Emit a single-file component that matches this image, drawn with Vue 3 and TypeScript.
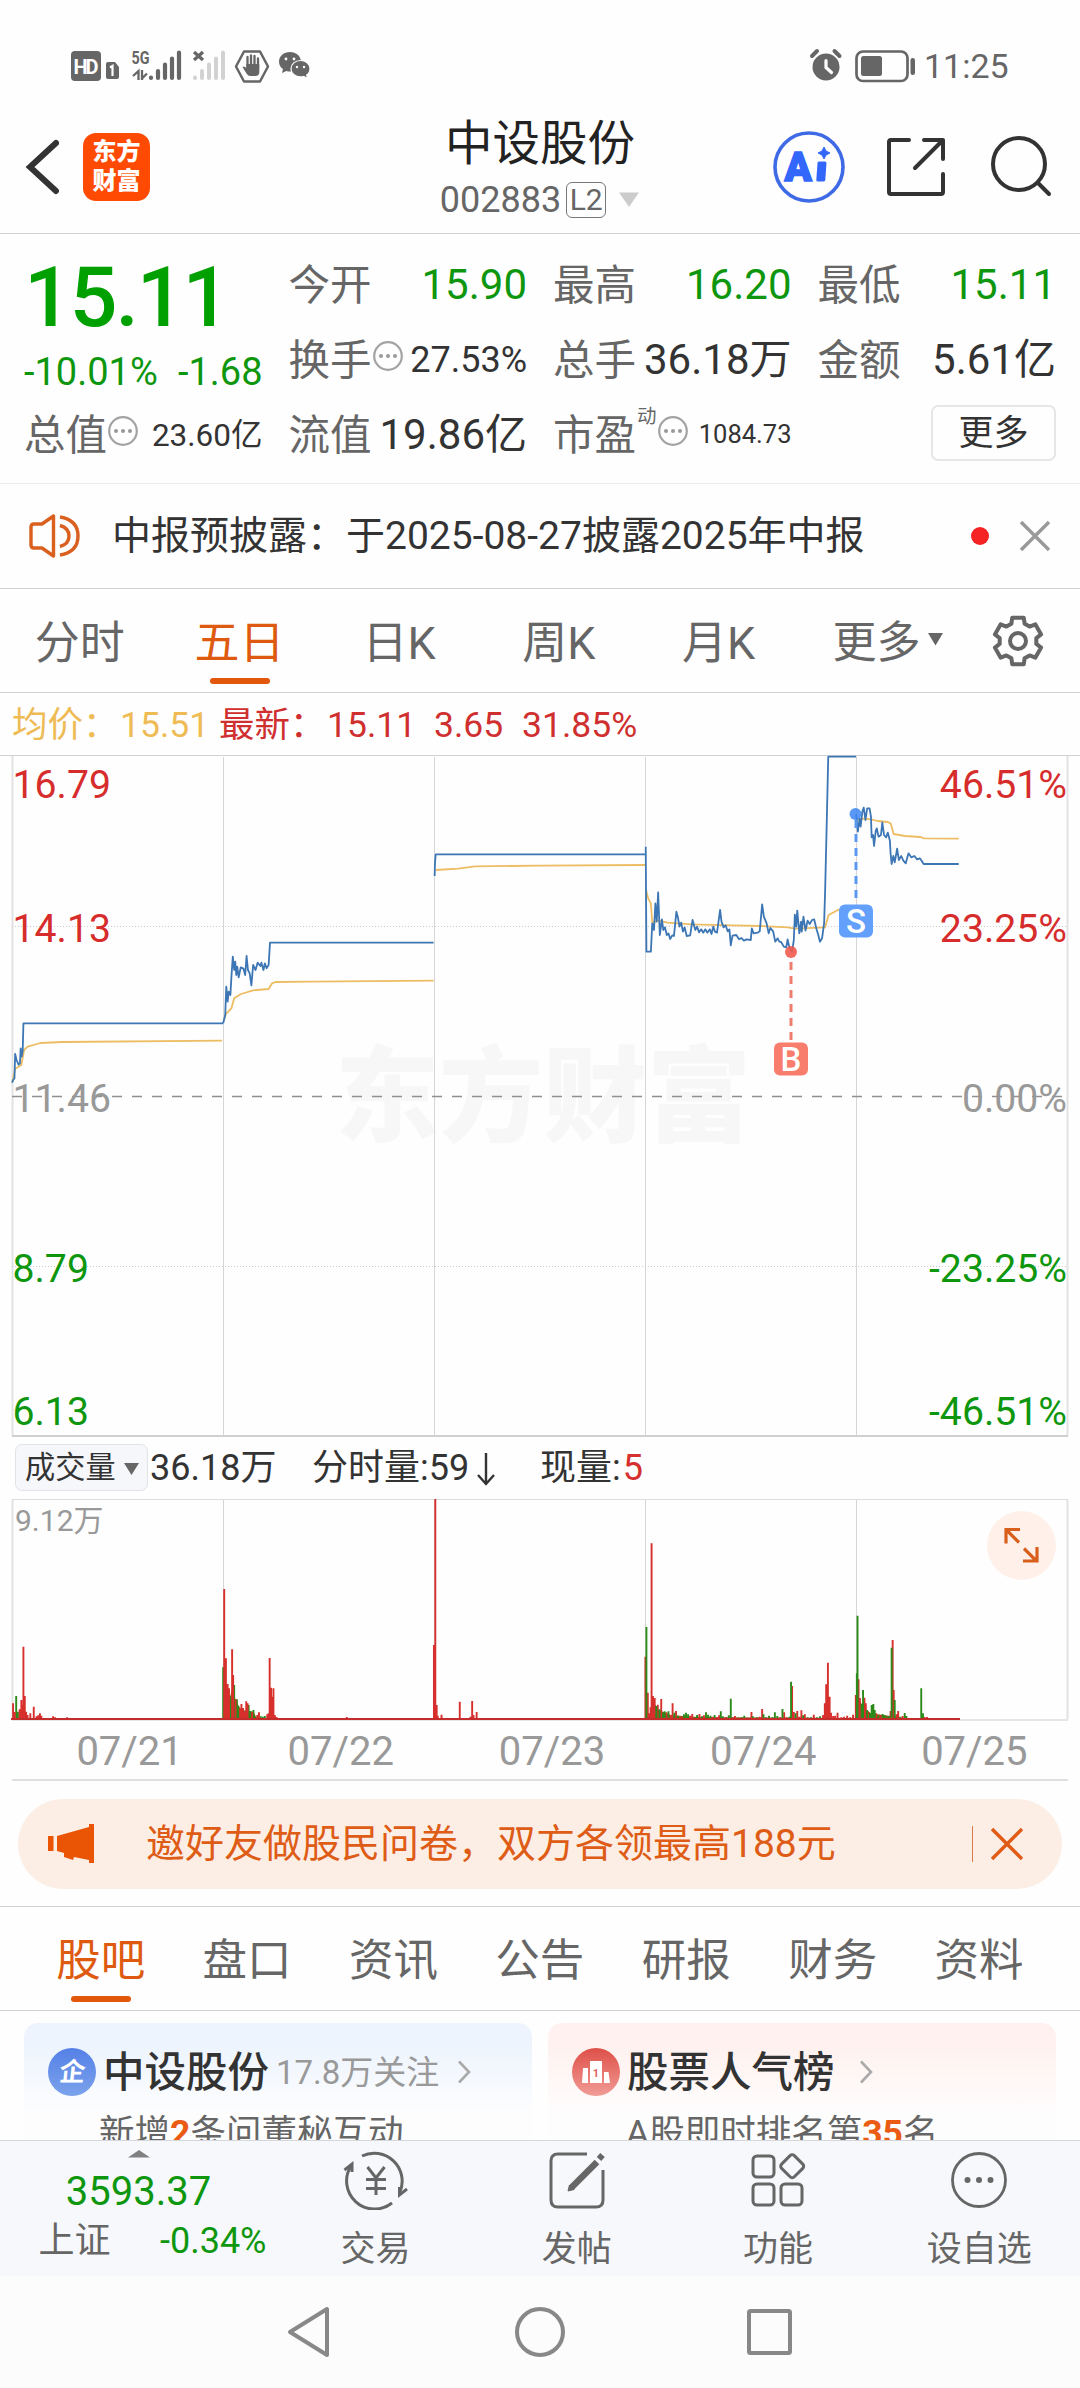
<script setup lang="ts">
type Bar = [number, number, 'r' | 'g']

const periods = ['分时', '五日', '日K', '周K', '月K']
const sections = ['股吧', '盘口', '资讯', '公告', '研报', '财务', '资料']
const days = ['07/21', '07/22', '07/23', '07/24', '07/25']
const verticals = [223.5, 434.5, 645.5, 856.5]

const prices = [
  { text: '16.79', pct: '46.51%', y: 43, tone: 'up' },
  { text: '14.13', pct: '23.25%', y: 187, tone: 'up' },
  { text: '11.46', pct: '0.00%', y: 357, tone: 'flat' },
  { text: '8.79', pct: '-23.25%', y: 527, tone: 'down' },
  { text: '6.13', pct: '-46.51%', y: 670, tone: 'down' },
]

const priceEarly = [
  '35,1478 38,1470 42,1465 44,1392 48,1410 54,1424 58,1420 60,1375 63,1400 66,1380 68,1300 648,1300',
  '648,1300 654,1275 657,1190 661,1235 664,1205 669,1215 672,1160 676,1100 680,1140 683,1115 686,1155 689,1130 693,1162 699,1132 707,1136 712,1155 716,1098 720,1140 725,1150 730,1186 735,1125 742,1140 748,1118 756,1128 759,1118 765,1140 769,1120 774,1135 780,1125 784,1058 1259,1058',
  '1262,858 1263,820 1265,793 1568,793 1875,793',
]
const avgEarly = [
  '36,1476 44,1436 62,1425 70,1380 80,1370 118,1359 180,1356 645,1352',
  '650,1290 656,1272 672,1255 680,1225 700,1212 735,1201 780,1197 790,1180 800,1176 900,1175 1259,1172',
  '1265,840 1330,836 1380,829 1568,827 1875,825',
]
const priceLate = [
  '307,770 309,1085 322,1085 326,1000 331,1020 335,940 339,995 343,907 348,1035 354,988 358,1020 363,1012 368,1035 373,1030 378,1047 384,1036 389,1038 396,965 401,985 405,1010 410,998 415,1025 420,1012 426,1038 436,1036 443,990 451,1020 456,1010 462,1027 468,1018 474,1028 480,1018 486,1028 493,1018 498,1032 503,1010 508,1025 514,1028 523,960 527,995 533,1012 539,1006 545,1024 550,1018 554,1066 559,1037 570,1035 578,1048 585,1044 592,1052 600,1048 612,1050 615,1015 620,1030 632,1028 638,1024 645,943 650,980 658,1000 664,1030 669,1014 677,1024 683,1055 690,1045 695,1055 700,1056 708,1070 715,1072 719,1048 724,1072 732,1085 737,1050 740,974 744,1010 747,962 753,1030 758,995 760,1025 765,980 771,1022 777,992 783,1002 790,990 796,988 803,1018 808,1035 813,1055 819,1045 825,1000 828,900 833,680 837,500 918,500',
  '918,672 921,705 923,725 928,685 931,710 936,665 940,653 945,690 950,655 957,655 961,680 963,742 967,735 970,768 975,722 978,715 983,740 990,735 994,697 999,735 1005,742 1010,728 1016,752 1018,790 1021,822 1026,798 1030,817 1037,776 1042,810 1049,798 1055,812 1062,820 1070,790 1078,802 1087,798 1095,808 1103,805 1108,812 1114,822 1216,822',
]
const avgLate = [
  '308,900 314,925 322,940 326,998 345,992 370,998 440,1003 560,1006 640,1008 720,1012 740,1016 828,1012 838,975 865,960 918,948',
  '920,690 940,686 962,688 980,693 1010,696 1018,700 1027,732 1060,738 1105,741 1115,745 1216,746',
]

const barsEarly: Bar[] = [
  [38, 820, 'r'], [43, 846, 'r'], [47, 798, 'g'], [52, 845, 'g'], [57, 838, 'r'], [62, 810, 'r'], [65, 825, 'r'],
  [68, 650, 'r'], [72, 798, 'r'], [76, 845, 'r'], [80, 855, 'r'], [88, 850, 'r'], [98, 830, 'r'], [106, 859, 'r'],
  [111, 856, 'r'], [116, 850, 'r'], [120, 857, 'r'], [154, 859, 'r'], [160, 862, 'r'], [195, 862, 'r'],
  [648, 712, 'g'], [651, 477, 'r'], [656, 685, 'r'], [661, 762, 'r'], [665, 775, 'r'], [669, 800, 'g'],
  [674, 658, 'r'], [677, 735, 'r'], [680, 765, 'g'], [684, 808, 'r'], [688, 808, 'g'], [692, 828, 'g'],
  [697, 835, 'r'], [701, 822, 'r'], [706, 834, 'r'], [711, 845, 'r'], [715, 814, 'r'], [719, 820, 'r'],
  [722, 825, 'g'], [727, 843, 'g'], [732, 846, 'r'], [736, 840, 'g'], [742, 860, 'g'], [747, 855, 'r'],
  [752, 847, 'r'], [757, 859, 'g'], [763, 860, 'g'], [769, 858, 'g'], [776, 853, 'r'], [780, 850, 'r'],
  [783, 684, 'r'], [787, 773, 'r'], [790, 800, 'r'], [794, 775, 'r'], [798, 855, 'r'], [803, 861, 'r'],
  [1007, 861, 'r'], [1260, 645, 'r'], [1264, 207, 'r'], [1268, 825, 'r'], [1271, 857, 'r'], [1282, 854, 'r'],
  [1335, 815, 'r'], [1366, 860, 'r'], [1371, 813, 'r'], [1375, 855, 'r'], [1384, 846, 'r'],
]
const barsLate: Bar[] = [
  [306, 680, 'r'], [309, 591, 'g'], [313, 788, 'r'], [317, 850, 'r'], [321, 832, 'r'], [324, 340, 'r'],
  [328, 798, 'r'], [333, 804, 'r'], [338, 828, 'g'], [342, 824, 'r'], [347, 838, 'g'], [352, 807, 'r'],
  [357, 848, 'g'], [362, 844, 'g'], [367, 847, 'r'], [373, 844, 'g'], [379, 855, 'r'], [385, 820, 'r'],
  [390, 848, 'g'], [395, 843, 'r'], [400, 857, 'g'], [406, 862, 'r'], [412, 860, 'r'], [418, 853, 'g'],
  [424, 848, 'g'], [430, 853, 'g'], [436, 857, 'r'], [442, 852, 'r'], [449, 862, 'g'], [456, 855, 'g'],
  [463, 852, 'r'], [470, 859, 'g'], [476, 856, 'r'], [482, 847, 'g'], [488, 854, 'g'], [495, 857, 'g'],
  [501, 860, 'r'], [507, 855, 'g'], [514, 862, 'r'], [520, 856, 'r'], [525, 844, 'g'], [531, 859, 'g'],
  [540, 862, 'r'], [548, 856, 'g'], [554, 806, 'g'], [559, 862, 'r'], [566, 858, 'r'], [575, 863, 'g'],
  [585, 862, 'g'], [593, 857, 'g'], [602, 863, 'r'], [614, 846, 'r'], [618, 859, 'g'], [630, 862, 'g'],
  [638, 860, 'r'], [645, 837, 'r'], [649, 853, 'g'], [656, 862, 'g'], [665, 857, 'g'], [675, 862, 'g'],
  [682, 847, 'g'], [689, 858, 'g'], [697, 862, 'r'], [704, 837, 'g'], [709, 847, 'r'], [716, 862, 'r'],
  [724, 860, 'g'], [729, 755, 'g'], [732, 768, 'r'], [737, 846, 'r'], [742, 850, 'g'], [747, 843, 'r'],
  [753, 860, 'r'], [759, 841, 'r'], [764, 856, 'g'], [769, 853, 'r'], [777, 862, 'g'], [787, 862, 'g'],
  [795, 854, 'r'], [804, 862, 'g'], [813, 859, 'g'], [822, 855, 'r'], [827, 820, 'r'], [831, 763, 'r'],
  [836, 698, 'r'], [841, 800, 'r'], [845, 848, 'r'], [851, 858, 'r'], [857, 857, 'r'], [864, 848, 'r'],
  [875, 862, 'r'], [883, 860, 'r'], [892, 857, 'r'], [901, 862, 'r'], [909, 854, 'r'], [917, 795, 'r'],
  [920, 730, 'g'], [922, 557, 'g'], [925, 748, 'r'], [929, 804, 'r'], [934, 822, 'g'], [938, 780, 'g'],
  [942, 803, 'r'], [946, 820, 'r'], [950, 840, 'g'], [954, 846, 'r'], [958, 850, 'g'], [963, 825, 'g'],
  [968, 822, 'g'], [972, 840, 'g'], [976, 850, 'r'], [982, 858, 'g'], [989, 855, 'r'], [995, 852, 'g'],
  [1001, 855, 'g'], [1007, 861, 'g'], [1013, 858, 'g'], [1018, 843, 'r'], [1021, 653, 'g'], [1024, 630, 'r'],
  [1027, 780, 'r'], [1030, 810, 'g'], [1035, 853, 'r'], [1040, 843, 'r'], [1046, 860, 'g'], [1053, 858, 'r'],
  [1059, 849, 'g'], [1064, 858, 'g'], [1107, 775, 'g'], [1112, 850, 'g'], [1117, 861, 'r'], [1124, 861, 'r'],
]

function barPath(bars: Bar[], tone: 'r' | 'g'): string {
  return bars.filter((b) => b[2] === tone).map(([x, y]) => `M${x} 868V${y}`).join('')
}

const gear = (() => {
  const pts: string[] = []
  for (let i = 0; i < 6; i++) {
    const mid = -90 + i * 60
    for (const [r, d] of [[18.5, -21], [24, -14], [24, 14], [18.5, 21]]) {
      const a = ((mid + d) * Math.PI) / 180
      pts.push(`${(27 + r * Math.cos(a)).toFixed(1)},${(27 + r * Math.sin(a)).toFixed(1)}`)
    }
  }
  return pts.join(' ')
})()
</script>

<template>
  <div class="page">
    <div class="status">
      <svg width="320" height="40" viewBox="0 0 320 40">
        <rect x="71" y="6" width="30" height="30" rx="4" fill="#666" />
        <text x="86" y="28.500" text-anchor="middle" class="st" font-size="20" font-weight="700" fill="#fff" textLength="25">HD</text>
        <path d="M108 17h7l4 5v10q0 2-2 2h-9q-2 0-2-2V19q0-2 2-2Z" fill="#666" />
        <path d="M110 22.500l2.500-1.500v10" fill="none" stroke="#fff" stroke-width="2.200" />
        <text x="131.500" y="18.500" class="st" font-size="18" font-weight="700" fill="#666" textLength="18" lengthAdjust="spacingAndGlyphs">5G</text>
        <path d="M138.500 35V26l-5.500 5M142 25v10M142.500 33l4.500-4.500" stroke="#666" stroke-width="2.300" fill="none" />
        <g stroke="#666" stroke-width="4.200" stroke-linecap="round">
          <path d="M151 32.500v.5M158 26v7M165 19.500V33M172 13.500V33M179 7.500V33" />
        </g>
        <path d="M194 7l9 8m0-8l-9 8" stroke="#666" stroke-width="3.200" />
        <g stroke="#d2d2d2" stroke-width="4" stroke-linecap="round">
          <path d="M195 32.500v.5M202 26v7M209 19.500V33M216 13.500V33M223 7.500V33" />
        </g>
        <path d="M244 6.500h16l8 15-8 15h-16l-8-15Z" fill="none" stroke="#666" stroke-width="2.500" stroke-linejoin="round" />
        <path d="M247.500 12v10M251 10.500v12M254.500 11v12M258 13.500v10" stroke="#666" stroke-width="2.300" stroke-linecap="round" />
        <path d="M246.300 19h13v8q0 4-4 4h-5q-2.300 0-3.800-2.500l-4-6.500q1.500-1.600 3.800 1Z" fill="#666" />
        <path d="M290 7c-6.200 0-11 4.200-11 9.700 0 3 1.600 5.600 4 7.400l-1 4 4.300-2.200c1.500.4 2 .5 3.700.5 6.200 0 11-4.400 11-9.700S296.200 7 290 7Z" fill="#666" />
        <path d="M300.500 15.500c-5.300 0-9.500 3.700-9.500 8.200s4.200 8.200 9.500 8.200c1.200 0 2.200-.1 3.200-.4l4 2-1-3.400c2.200-1.600 3.300-3.900 3.300-6.400 0-4.500-4.200-8.200-9.500-8.200Z" fill="#666" stroke="#fefefe" stroke-width="1.200" />
        <g fill="#fefefe"><circle cx="286" cy="14" r="1.400" /><circle cx="294" cy="14" r="1.400" /><circle cx="297" cy="22" r="1.200" /><circle cx="304" cy="22" r="1.200" /></g>
      </svg>
      <span class="grow"></span>
      <svg width="112" height="40" viewBox="0 0 112 40">
        <circle cx="19" cy="22" r="13.500" fill="#666" />
        <path d="M5 11l5-5M27.500 6l5 5" stroke="#666" stroke-width="4" stroke-linecap="round" />
        <path d="M19 15.500v7l5.500 5" fill="none" stroke="#fefefe" stroke-width="3.200" stroke-linecap="round" />
        <rect x="49.500" y="6.500" width="51" height="29.500" rx="6.500" fill="none" stroke="#666" stroke-width="2.700" />
        <rect x="54" y="11" width="21" height="20" rx="2.500" fill="#666" />
        <rect x="103.500" y="13" width="4.500" height="17" rx="2.200" fill="#666" />
      </svg>
      <span class="clock">11:25</span>
    </div>

    <header class="head">
      <svg class="back" width="34" height="60" viewBox="0 0 34 60"><path d="M31 6L5 30l26 24" fill="none" stroke="#333" stroke-width="6" stroke-linecap="round" /></svg>
      <div class="logo"><span>东方</span><span>财富</span></div>
      <div class="title">
        <h1>中设股份</h1>
        <div class="code">002883<i>L2</i><svg width="22" height="16" viewBox="0 0 22 16"><path d="M1 .5h20L11 15Z" fill="#ccc" /></svg></div>
      </div>
      <svg class="ai" width="74" height="74" viewBox="0 0 74 74">
        <circle cx="37" cy="37" r="34" fill="none" stroke="#3f6ae6" stroke-width="3.600" />
        <text x="12.500" y="50.500" class="st" font-size="40" font-weight="900" fill="#3366fb" stroke="#3366fb" stroke-width="1.500">A</text>
        <path d="M47 33h6l-1.200 17h-6Z" fill="#3366fb" stroke="#3366fb" stroke-width="3" stroke-linejoin="round" />
        <path d="M52 17l2 4 4 2-4 2-2 4-2-4-4-2 4-2Z" fill="#3366fb" stroke="#3366fb" stroke-width="1" />
      </svg>
      <svg class="share" width="60" height="60" viewBox="0 0 60 60" fill="none" stroke="#333" stroke-width="4" stroke-linecap="round" stroke-linejoin="round">
        <path d="M22 3H4q-2 0-2 2v50q0 2 2 2h50q2 0 2-2V37M37 3h19v19M55 4L28 31" />
      </svg>
      <svg class="find" width="64" height="64" viewBox="0 0 64 64" fill="none" stroke="#333" stroke-width="4" stroke-linecap="round"><circle cx="29" cy="29" r="26" /><path d="M48 48l11 11" /></svg>
    </header>

    <section class="quote">
      <div class="last">
        <b>15.11</b>
        <p><span>-10.01%</span><span>-1.68</span></p>
      </div>
      <div class="cell"><label>今开</label><em class="g">15.90</em></div>
      <div class="cell"><label>最高</label><em class="g">16.20</em></div>
      <div class="cell"><label>最低</label><em class="g">15.11</em></div>
      <div class="cell"><label>换手</label><svg class="more" viewBox="0 0 32 32"><use href="#dots" /></svg><em class="m">27.53%</em></div>
      <div class="cell"><label>总手</label><em>36.18万</em></div>
      <div class="cell"><label>金额</label><em>5.61亿</em></div>
      <div class="cell"><label>总值</label><svg class="more" viewBox="0 0 32 32"><g id="dots"><circle cx="16" cy="16" r="13.800" fill="none" stroke="#a3a3a3" stroke-width="2.200" /><g fill="#999"><circle cx="9" cy="16" r="2" /><circle cx="16" cy="16" r="2" /><circle cx="23" cy="16" r="2" /></g></g></svg><em class="s">23.60亿</em></div>
      <div class="cell"><label>流值</label><em>19.86亿</em></div>
      <div class="cell"><label>市盈</label><sup>动</sup><svg class="more" viewBox="0 0 32 32"><use href="#dots" /></svg><em class="xs">1084.73</em></div>
      <div class="cell end"><button>更多</button></div>
    </section>

    <div class="notice">
      <svg width="54" height="46" viewBox="0 0 54 46" fill="none" stroke="#d9601f" stroke-width="3.400">
        <path d="M25.500 3v40L14 35H6q-3 0-3-3V14q0-3 3-3h8Z" stroke-linejoin="round" />
        <path d="M32 12.500q9 2.500 9 10.500t-9 10.500M32 4q18 3 18 19T32 42" />
      </svg>
      <span class="msg">中报预披露：于2025-08-27披露2025年中报</span>
      <i class="dot"></i>
      <svg width="32" height="32" viewBox="0 0 32 32"><path d="M2 2l28 28m0-28L2 30" stroke="#999" stroke-width="3.400" /></svg>
    </div>

    <nav class="periods">
      <a v-for="(p, i) in periods" :key="p" :class="{ on: i === 1 }">{{ p }}</a>
      <span class="pmore">更多<svg width="16" height="13" viewBox="0 0 16 13"><path d="M0 0h15L7.500 12.500Z" fill="#666" /></svg></span>
      <svg class="gear" width="54" height="54" viewBox="0 0 54 54" fill="none" stroke="#666" stroke-width="4"><polygon :points="gear" stroke-linejoin="round" /><circle cx="27" cy="27" r="8" /></svg>
    </nav>

    <div class="info">
      <span class="avg">均价：</span><span class="avg v1">15.51</span>
      <span class="v2">最新：</span><span class="v3">15.11</span><span class="v4">3.65</span><span class="v5">31.85%</span>
    </div>

    <svg class="chart" width="1080" height="682" viewBox="0 0 1080 682">
      <text x="543" y="379" text-anchor="middle" class="mark">东方财富</text>
      <path d="M0 .5H1080" stroke="#d2d2d2" />
      <path d="M12.500 1V680M1067.500 1V680" stroke="#e2e2e2" stroke-width="2" />
      <path d="M12 681H1068" stroke="#d0d0d0" stroke-width="2" />
      <path v-for="x in verticals" :key="x" :d="`M${x} 2V680`" stroke="#d6d6d6" />
      <path d="M12 171.500H1067M12 511.500H1067" stroke="#ccc" stroke-dasharray="1 2" />
      <path d="M12 341.500H1067" stroke="#909090" stroke-width="1.600" stroke-dasharray="10 10" />
      <g v-for="p in prices" :key="p.text" :class="p.tone" class="axis">
        <text x="12.500" :y="p.y">{{ p.text }}</text>
        <text x="1067" :y="p.y" text-anchor="end">{{ p.pct }}</text>
      </g>
      <g fill="none" stroke-linejoin="round">
        <g transform="translate(0 -165) scale(.34439 .33333)">
          <polyline v-for="s in avgEarly" :key="s" :points="s" class="ln avgln" />
          <polyline v-for="s in priceEarly" :key="s" :points="s" class="ln" />
        </g>
        <g transform="translate(540 -165) scale(.34439 .33333)">
          <polyline v-for="s in avgLate" :key="s" :points="s" class="ln avgln" />
          <polyline v-for="s in priceLate" :key="s" :points="s" class="ln" />
        </g>
      </g>
      <circle cx="855.500" cy="59" r="6" fill="#3d86f3" fill-opacity=".85" />
      <path d="M856 65V149" stroke="#5b98ee" stroke-width="3" stroke-dasharray="8 6" />
      <rect x="839" y="149.500" width="34" height="33" rx="6" fill="#62a0fb" />
      <text x="856" y="177.500" text-anchor="middle" class="tag">S</text>
      <circle cx="791" cy="197" r="6" fill="#f25a4c" fill-opacity=".9" />
      <path d="M791 207V287" stroke="#ec7d6f" stroke-width="3" stroke-dasharray="8 6" />
      <rect x="774" y="287.500" width="34" height="33" rx="6" fill="#f87d6c" />
      <text x="791" y="315.500" text-anchor="middle" class="tag">B</text>
    </svg>

    <div class="vinfo">
      <span class="chip">成交量<svg width="15" height="12" viewBox="0 0 15 12"><path d="M0 0h15L7.500 12Z" fill="#666" /></svg></span>
      <span class="t1">36.18万</span>
      <span class="t2">分时量:59</span>
      <svg width="20" height="34" viewBox="0 0 20 34" fill="none" stroke="#333" stroke-width="2.400"><path d="M10 1v30M2 23l8 9 8-9" /></svg>
      <span class="t3">现量:<i>5</i></span>
    </div>

    <svg class="volume" width="1080" height="223" viewBox="0 0 1080 223">
      <path d="M12 .5H1068" stroke="#dcdcdc" />
      <path d="M12.500 1V220M1067.500 1V220" stroke="#e2e2e2" stroke-width="2" />
      <path d="M12 221H1068" stroke="#dedede" stroke-width="1.500" />
      <path v-for="x in verticals" :key="x" :d="`M${x} 1V220`" stroke="#d6d6d6" />
      <text x="15" y="32" class="vmax">9.12万</text>
      <g transform="translate(0 -69) scale(.34439 .33333)" fill="none">
        <path d="M648 868V745L662 785 668 800 676 770 684 810 700 840 736 845 744 862V868Z" fill="#8a5c14" />
        <path :d="barPath(barsEarly, 'g')" class="bar vg" />
        <path :d="barPath(barsEarly, 'r')" class="bar vr" />
      </g>
      <g transform="translate(540 -69) scale(.34439 .33333)" fill="none">
        <path d="M325 868V810L345 840 380 855 440 860 520 862 920 864V800L940 830 960 850 1060 864V868Z" fill="#8a5c14" />
        <path :d="barPath(barsLate, 'r')" class="bar vr" />
        <path :d="barPath(barsLate, 'g')" class="bar vg" />
      </g>
      <path d="M11 220H960" stroke="#c42b2b" stroke-width="2.200" />
      <circle cx="1021.500" cy="46.500" r="34.500" fill="#fff1ea" />
      <path d="M1006 44.500V30.500h14M1007 31.500l12 12M1024 49.500l12 12M1037 48v14h-14" fill="none" stroke="#d8601c" stroke-width="3.200" />
    </svg>

    <div class="dates"><span v-for="d in days" :key="d">{{ d }}</span></div>

    <div class="promo">
      <svg width="48" height="40" viewBox="0 0 48 40" fill="#e95504"><path d="M0 12h5.500v15H0ZM9 12L41 3V0h5v39h-5v-3l-15-3-1 3-9-3V29l-7-2Z" /></svg>
      <span>邀好友做股民问卷，双方各领最高188元</span>
      <i></i>
      <svg width="34" height="34" viewBox="0 0 34 34"><path d="M2 2l30 30m0-30L2 32" stroke="#de5c15" stroke-width="3.400" /></svg>
    </div>

    <nav class="sections"><a v-for="(s, i) in sections" :key="s" :class="{ on: i === 0 }">{{ s }}</a></nav>

    <div class="cards">
      <article class="blue">
        <div class="ct">
          <svg width="48" height="48" viewBox="0 0 48 48">
            <defs><linearGradient id="gb" x2="0" y2="1"><stop stop-color="#5580e6" /><stop offset="1" stop-color="#7ba2ec" /></linearGradient></defs>
            <circle cx="24" cy="24" r="24" fill="url(#gb)" />
            <text x="24" y="33.500" text-anchor="middle" class="st" font-size="26" font-weight="700" fill="#fff" transform="skewX(-6) translate(3 0)">企</text>
          </svg>
          <b>中设股份</b><small>17.8万关注</small>
          <svg class="chev" width="14" height="24" viewBox="0 0 14 24"><path d="M2 1.500l10 10.500L2 22.500" fill="none" stroke="#aaa" stroke-width="2.600" /></svg>
        </div>
        <p class="c1">新增<strong>2</strong>条问董秘互动</p>
      </article>
      <article class="red">
        <div class="ct">
          <svg width="48" height="48" viewBox="0 0 48 48">
            <defs><linearGradient id="gr" x2="0" y2="1"><stop stop-color="#dd5048" /><stop offset="1" stop-color="#f29b96" /></linearGradient></defs>
            <circle cx="24" cy="24" r="24" fill="url(#gr)" />
            <path d="M10 35l1-15h5v15ZM18 35V13h12v22ZM32 35V24h4.500l1.500 11Z" fill="#fff" />
            <text x="24" y="29" text-anchor="middle" class="st" font-size="11" font-weight="700" fill="#e0645d">1</text>
          </svg>
          <b>股票人气榜</b>
          <svg class="chev far" width="14" height="24" viewBox="0 0 14 24"><path d="M2 1.500l10 10.500L2 22.500" fill="none" stroke="#aaa" stroke-width="2.600" /></svg>
        </div>
        <p class="c2">A股即时排名第<strong>35</strong>名</p>
      </article>
    </div>

    <footer class="tools">
      <div class="index">
        <svg width="22" height="8" viewBox="0 0 22 8"><path d="M0 7.500L11 0l11 7.500Z" fill="#808080" /></svg>
        <b>3593.37</b>
        <p><span>上证</span><em>-0.34%</em></p>
      </div>
      <div class="tool">
        <svg width="68" height="60" viewBox="0 0 68 60" fill="none" stroke="#666" stroke-width="3">
          <path d="M20 6a28 28 0 0 1 38 36M50 53A28 28 0 0 1 9 16" /><path d="M2.500 20l7.500-6v8M65 39l-7.500 6v-8" />
          <path d="M25.500 17L34 28l8.500-11M34 28v17M24 29.500h20M24 38.500h20" />
        </svg><span>交易</span>
      </div>
      <div class="tool">
        <svg width="68" height="60" viewBox="0 0 68 60" fill="none" stroke="#666" stroke-width="3">
          <path d="M44 4H15q-7 0-7 7v39q0 7 7 7h38q7 0 7-7V20" /><path d="M54 12L28 38" stroke-width="6.500" /><path d="M25 41l1.500-6 4.500 4.500Z" fill="#666" stroke-width="1" /><path d="M56 9l3.500-4" stroke-width="6" />
        </svg><span>发帖</span>
      </div>
      <div class="tool">
        <svg width="68" height="60" viewBox="0 0 68 60" fill="none" stroke="#666" stroke-width="3" stroke-linejoin="round">
          <rect x="9" y="6" width="21" height="21" rx="4" /><rect x="9" y="34" width="21" height="21" rx="4" /><rect x="37" y="34" width="21" height="21" rx="4" />
          <rect x="39.200" y="7.200" width="18" height="18" rx="3" transform="rotate(45 48.200 16.200)" />
        </svg><span>功能</span>
      </div>
      <div class="tool">
        <svg width="68" height="60" viewBox="0 0 68 60"><circle cx="34" cy="30" r="26.500" fill="none" stroke="#666" stroke-width="2.800" /><g fill="#666"><circle cx="22.500" cy="30" r="3" /><circle cx="34" cy="30" r="3" /><circle cx="45.500" cy="30" r="3" /></g></svg><span>设自选</span>
      </div>
    </footer>

    <div class="sysnav">
      <svg width="540" height="56" viewBox="0 0 540 56" fill="none" stroke="#888" stroke-width="4" stroke-linejoin="round">
        <path d="M57 5v46L20 28Z" /><circle cx="270" cy="28" r="23" /><rect x="479" y="7" width="41" height="42" rx="1.500" />
      </svg>
    </div>
  </div>
</template>

<style>
body { margin: 0; }
</style>

<style scoped>
.page { width: 1080px; height: 2388px; overflow: hidden; background: #fefefe; color: #333; font-family: Roboto, "Noto Sans CJK SC", sans-serif; line-height: 1.2; display: flex; flex-direction: column; }
.page > * { flex: none; box-sizing: border-box; }
svg { display: block; flex: none; }
.st { font-family: Roboto, "Noto Sans CJK SC", sans-serif; }
.grow { flex: 1; }
i, em { font-style: normal; }
p, h1 { margin: 0; }

.status { height: 106px; padding: 45px 71px 0 0; display: flex; align-items: flex-start; }
.clock { font-size: 34px; line-height: 42px; color: #666; width: 85px; margin-left: 5px; }

.head { height: 128px; border-bottom: 1px solid #d2d2d2; display: flex; align-items: center; padding: 0 26px 6px 25px; }
.head > * { flex: none; }
.logo { width: 67px; height: 68px; border-radius: 13px; background: #ff4a04; margin-left: 24px; color: #fff; font-size: 24px; line-height: 29px; font-weight: 900; display: flex; flex-direction: column; align-items: center; justify-content: center; box-sizing: border-box; }
.title { width: 200px; margin-left: 290px; padding-top: 6px; display: flex; flex-direction: column; align-items: center; }
h1 { font-size: 47.500px; line-height: 56px; font-weight: 400; color: #222; margin-top: 4px; }
.code { font-size: 36px; line-height: 54px; color: #666; display: flex; align-items: center; height: 56px; white-space: nowrap; }
.code i { font-size: 30px; line-height: 34px; width: 38px; height: 34px; text-align: center; border: 1px solid #777; border-radius: 6px; margin: 0 12px 0 5px; }
.ai { margin-left: 132px; }
.share { margin-left: 41px; }
.find { margin-left: 43px; }

.quote { height: 250px; padding: 14px 24px 10px; border-bottom: 1px solid #ececec; display: grid; grid-template-columns: repeat(4, 238.500px); grid-template-rows: repeat(3, 75px); column-gap: 26px; }
.last { grid-row: 1 / 3; color: #00a000; display: flex; flex-direction: column; }
.last b { font-weight: 500; font-size: 84px; line-height: 100px; margin-left: 0; letter-spacing: -2px; }
.last p { display: flex; justify-content: space-between; font-size: 38px; line-height: 48px; color: #0e970e; }
.cell { display: flex; align-items: center; position: relative; white-space: nowrap; font-size: 42px; color: #333; }
.cell label { font-size: 41.500px; color: #666; }
.cell em { margin-left: auto; }
.cell .g { color: #0e970e; }
.cell .m { font-size: 36px; }
.cell .s { font-size: 31.500px; }
.cell .xs { font-size: 25.500px; margin-top: -3px; }
.cell sup { font-size: 19.500px; color: #666; line-height: 20px; margin: -37px 0 0 1px; align-self: center; }
.more { width: 32px; height: 32px; margin-top: -9px; margin-left: 0; }
.cell.end { justify-content: flex-end; }
button { font: 35px/54px Roboto, "Noto Sans CJK SC", sans-serif; color: #333; width: 125px; height: 56px; padding: 0; border: 2px solid #e6e6e6; border-radius: 7px; background: none; margin-bottom: 6px; }

.notice { height: 105px; border-bottom: 1px solid #d2d2d2; display: flex; align-items: center; padding: 0 29px 0 28px; font-size: 39px; }
.msg { margin-left: 30px; flex: 1; white-space: nowrap; }
.dot { width: 18px; height: 18px; border-radius: 50%; background: #f52323; margin-right: 30px; }

.periods { height: 104px; border-bottom: 1px solid #d2d2d2; display: flex; align-items: center; font-size: 45px; color: #666; }
.periods a { width: 159.700px; text-align: center; }
.periods a, .sections a { height: 100%; display: flex; align-items: center; justify-content: center; position: relative; box-sizing: border-box; padding-top: 6px; }
a.on { color: #de5a10; }
a.on::after { content: ""; position: absolute; left: 50%; margin-left: -30px; bottom: 8px; width: 60px; height: 6px; border-radius: 3px; background: #e2570b; }
.pmore { display: flex; align-items: center; margin-left: 34px; padding-top: 6px; gap: 8px; font-size: 44px; }
.pmore svg { margin-top: -8px; }
.gear { margin-left: 47px; margin-top: 1px; }

.info { height: 62px; display: flex; align-items: center; padding-left: 12px; padding-top: 2px; font-size: 35.500px; white-space: nowrap; color: #d02f2f; }
.avg { color: #eebb55; }
.info span { flex: none; }
.info .avg:first-child { width: 108px; }
.v1 { width: 99px; }
.v2 { width: 108px; }
.v3 { width: 107px; }
.v4 { width: 88px; }

.mark { font-family: "Noto Sans CJK SC", sans-serif; font-weight: 900; font-size: 104px; fill: #f7f7f7; }
.axis { font-size: 39.200px; }
.up { fill: #d62c2c; }
.flat { fill: #999; }
.down { fill: #0e970e; }
.ln { stroke: #3c76b4; stroke-width: 1.800; vector-effect: non-scaling-stroke; }
.avgln { stroke: #ecbd63; }
.tag { font-size: 33px; font-weight: 500; fill: #fff; }

.vinfo { height: 62px; display: flex; align-items: center; padding: 2px 0 0 15px; font-size: 36px; white-space: nowrap; }
.chip { width: 133px; height: 47px; box-sizing: border-box; border: 1px solid #e1e3e8; border-radius: 7px; background: #f6f7fa; font-size: 30.200px; display: flex; align-items: center; padding: 2px 0 0 9px; gap: 8px; margin-top: -3px; }
.t1 { width: 162px; margin-left: 2px; }
.t2 { width: 164px; }
.t3 { margin-left: 44px; }
.t3 i { color: #d52f2f; margin-left: 2px; }

.vmax { font-size: 30px; fill: #999; }
.bar { stroke-width: 5.500; }
.vr { stroke: #d62f2c; }
.vg { stroke: #2b8a1a; }

.dates { height: 60px; margin: -1px 12px 0; border-bottom: 2px solid #e0e0e0; display: flex; padding: 0 0 0 12px; font-size: 40px; color: #999; }
.dates span { flex: none; width: 211.200px; text-align: center; line-height: 62px; height: 58px; }

.promo { height: 90px; margin: 18px 18px 17px; border-radius: 45px; background: #fceee5; display: flex; align-items: center; padding: 0 38px 0 30px; font-size: 39px; color: #de5c15; }
.promo span { margin-left: 50px; flex: 1; white-space: nowrap; }
.promo i { width: 1px; height: 36px; background: #de7a45; margin-right: 17px; }

.sections { height: 105px; border-top: 1px solid #d2d2d2; border-bottom: 1px solid #d2d2d2; display: flex; padding: 0 27.500px; font-size: 44.500px; color: #666; }
.sections a { width: 146.400px; }

.cards { height: 129px; overflow: hidden; padding: 12px 24px 0; display: flex; gap: 16px; }
article { width: 508px; height: 140px; border-radius: 14px; box-sizing: border-box; padding: 24px 0 0 24px; }
.blue { background: linear-gradient(#edf4fd 0, #edf4fd 22px, #fdfdfe 90px); }
.red { background: linear-gradient(#fef1ef 0, #fef1ef 22px, #fefdfd 90px); }
.ct { display: flex; align-items: center; height: 49px; white-space: nowrap; }
.ct b { font-size: 41.500px; font-weight: 500; margin-left: 7px; padding-top: 2px; }
.ct small { font-size: 33px; color: #999; margin-left: 7px; padding-top: 2px; }
.chev { margin-left: 18px; }
.chev.far { margin-left: 24px; }
article p { font-size: 35.500px; line-height: 42px; color: #666; margin-top: 16px; white-space: nowrap; }
.c1 { padding-left: 51px; }
.c2 { padding-left: 54px; }
strong { color: #ea5b14; font-weight: 700; }

.tools { height: 136px; background: #f6f8fb; border-top: 1px solid #d6d7dd; display: flex; padding-left: 8px; }
.index { width: 267px; display: flex; flex-direction: column; align-items: center; padding-top: 9px; }
.index > svg { margin-right: 6px; }
.index b { font-weight: 400; font-size: 40px; line-height: 48px; color: #0e970e; margin: 10px 6px 0 0; }
.index p { display: flex; font-size: 36px; line-height: 50px; width: 228px; justify-content: space-between; color: #666; margin-left: 22px; }
.index em { color: #0e970e; }
.tool { width: 201.200px; display: flex; flex-direction: column; align-items: center; padding-top: 9px; font-size: 35px; color: #666; }
.tool span { line-height: 50px; margin-top: 15px; }

.sysnav { height: 112px; background: #fcfcfc; display: flex; padding: 28px 0 0 270px; }
</style>
